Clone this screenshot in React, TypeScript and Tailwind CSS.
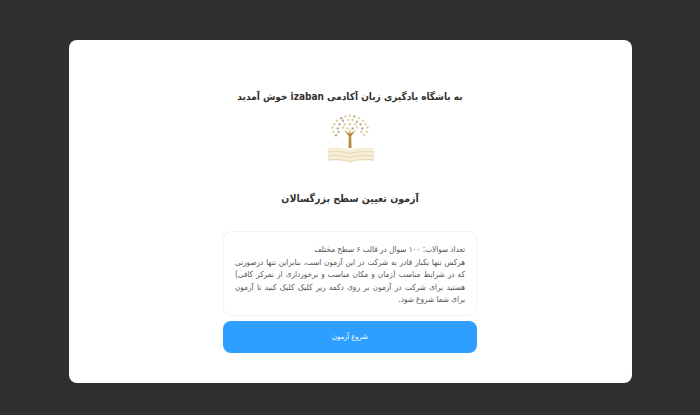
import React from 'react';

const leaves = [
  [20, 5], [25, 3], [30, 2], [35, 3], [40, 5], [15, 8], [22, 8], [28, 7], [33, 7], [38, 9], [45, 8],
  [12, 12], [18, 12], [24, 12], [36, 12], [42, 12], [48, 12], [10, 16], [16, 17], [22, 16], [38, 16], [44, 17], [50, 16],
  [11, 21], [17, 21], [43, 21], [49, 21], [14, 25], [46, 25], [27, 17], [33, 17], [30, 12],
];

function Logo() {
  return (
    <svg width="60" height="50" viewBox="0 0 60 50" className="block">
      <g transform="translate(3.75 0) scale(.875 .85)">
        {leaves.map(([x, y], i) => (
          <circle key={i} cx={x} cy={y} r="1.4" fill={i % 3 === 0 ? '#b5ae9c' : '#e3cf9a'} />
        ))}
      </g>
      <path d="M28.5 34 L28.8 22 L24 16 L29.3 19.5 L30 14 L30.7 19.5 L36 16 L31.2 22 L31.5 34 Z" fill="#b58a3e" />
      <path d="M8 34 C16 33 25 33.5 30 36 C35 33.5 44 33 54 34 L54 47 C44 46 35 46.5 30 49 C25 46.5 16 46 8 47 Z" fill="#f5eed8" />
      <path d="M8 38 C16 37 25 37.5 30 40 C35 37.5 44 37 54 38 M8 42 C16 41 25 41.5 30 44 C35 41.5 44 41 54 42 M8 46 C16 45 25 45.5 30 48 C35 45.5 44 45 54 46" fill="none" stroke="#e2d2a6" strokeWidth=".8" />
    </svg>
  );
}

export default function App() {
  return (
    <div dir="rtl" className="min-h-[415px] bg-[#2f3130] pt-10 px-[68px] font-['DejaVu_Sans_Condensed','DejaVu_Sans',sans-serif]">
      <div className="w-[563px] h-[343px] bg-white rounded-lg flex flex-col items-center pt-[48px] pr-px">
        <h1 className="text-[10px] leading-[18px] font-bold text-[#333]">
          به باشگاه یادگیری زبان آکادمی izaban خوش آمدید
        </h1>
        <div className="mt-[8px]">
          <Logo />
        </div>
        <h2 className="mt-[24px] text-[10.5px] leading-[20px] font-bold text-[#333]">
          آزمون تعیین سطح بزرگسالان
        </h2>
        <div className="mt-[23px] w-[254px] h-[85px] rounded-lg border border-[#f3f3f3] px-[11px] pt-[11px] text-[8.1px] leading-[12.6px] text-[#555] text-justify">
          <p>تعداد سوالات: ۱۰۰ سوال در قالب ۶ سطح مختلف</p>
          <p>
            هرکس تنها یکبار قادر به شرکت در این آزمون است، بنابراین تنها درصورتی که در شرایط مناسب (زمان و مکان مناسب و برخورداری از تمرکز کافی) هستید برای شرکت در آزمون بر روی دکمه زیر کلیک کلیک کنید تا آزمون برای شما شروع شود.
          </p>
        </div>
        <button className="mt-[5px] w-[254px] h-[32px] rounded-lg bg-[#2f9fff] text-white text-[7.5px] pb-px">
          شروع آزمون
        </button>
      </div>
    </div>
  );
}
